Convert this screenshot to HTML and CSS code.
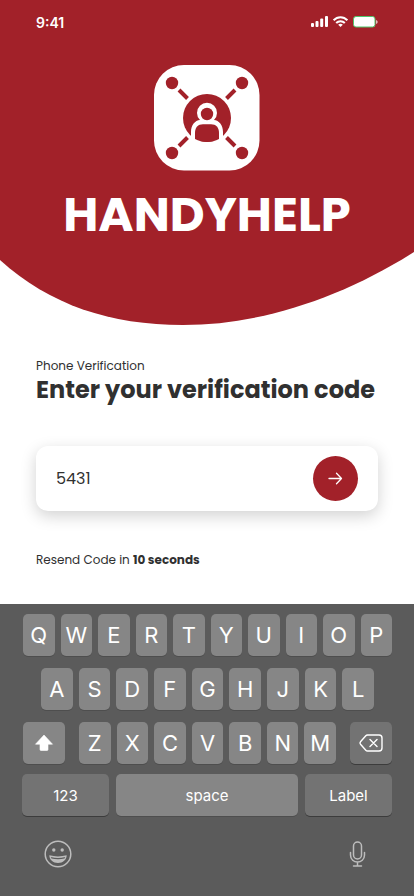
FILE: index.html
```html
<!DOCTYPE html>
<html lang="en">
<head>
<meta charset="utf-8">
<meta name="viewport" content="width=device-width, initial-scale=1">
<title>HandyHelp – Phone Verification</title>
<link rel="stylesheet" href="styles.css">
</head>
<body>
<div class="screen">
  <header class="hero">
    <svg class="hero-shape" viewBox="0 0 414 326" preserveAspectRatio="none" aria-hidden="true">
      <path d="M0 0H414V252C343 297 262 325 183 325C110 325 50 305 0 260Z" fill="#a22129"/>
    </svg>
    <div class="status">
      <span class="time">9:41</span>
      <svg width="68" height="12" viewBox="0 0 68 12" aria-hidden="true">
        <g fill="#fff">
          <rect x="1" y="7" width="3" height="4" rx="1"/>
          <rect x="5.500" y="5" width="3" height="6" rx="1"/>
          <rect x="10.200" y="2.500" width="3" height="8.500" rx="1"/>
          <rect x="15" y="0" width="3" height="11" rx="1"/>
          <path d="M66.300 4v4c1.600-.7 1.600-3.300 0-4Z"/>
        </g>
        <g fill="none" stroke="#fff" stroke-width="2">
          <path d="M23.600 4.200C27.500.1 33.500.1 37.400 4.200"/>
          <path d="M26.200 7C28.600 4.500 32.400 4.500 34.800 7"/>
        </g>
        <path d="M28.200 8.700C29.600 7.400 31.400 7.400 32.800 8.700L30.500 11Z" fill="#fff"/>
        <rect x="43.500" y=".5" width="21.500" height="10.500" rx="2.500" fill="#fff" stroke="#4fc66b"/>
      </svg>
    </div>
    <svg class="logo" width="106" height="106" viewBox="0 0 106 106" aria-hidden="true">
      <rect width="105.500" height="105.500" rx="30" fill="#fff"/>
      <g stroke="#a22129" stroke-width="4">
        <path d="M25 25L33.500 33.500M81 25L72.500 33.500M25 81L33.500 72.500M81 81L72.500 72.500"/>
      </g>
      <g fill="#a22129">
        <circle cx="18" cy="18" r="6.200"/><circle cx="88" cy="18" r="6.200"/>
        <circle cx="18" cy="88" r="6.200"/><circle cx="88" cy="88" r="6.200"/>
        <circle cx="53" cy="53" r="24"/>
      </g>
      <path d="M37 76V67C37 60 41 55.500 46 55A10 10 0 1 1 60 55C65 55.500 69 60 69 67V76Z" fill="#fff"/>
      <circle cx="53" cy="49" r="6.200" fill="#a22129"/>
      <path d="M41 74V68C41 62.500 44 59.200 49 59.200H57C62 59.200 65 62.500 65 68V74C58 78 48 78 41 74Z" fill="#a22129"/>
    </svg>
    <h1 class="brand">HANDYHELP</h1>
  </header>

  <main class="content">
    <p class="note">Phone Verification</p>
    <h2 class="title"><label for="code">Enter your verification code</label></h2>
    <form class="field">
      <input class="code" id="code" type="text" inputmode="numeric" value="5431">
      <button class="submit" type="button" aria-label="Continue">
        <svg width="15" height="13" viewBox="0 0 15 13" fill="none" stroke="#fff" stroke-width="1.300" stroke-linecap="round" stroke-linejoin="round" aria-hidden="true"><path d="M1 6.500H13.500M8.500 1.300L13.500 6.500L8.500 11.700"/></svg>
      </button>
    </form>
    <p class="note">Resend Code in <strong>10 seconds</strong></p>
  </main>

  <section class="keyboard" aria-label="Keyboard">
    <div class="row">
      <button class="key">Q</button><button class="key">W</button><button class="key">E</button><button class="key">R</button><button class="key">T</button><button class="key">Y</button><button class="key">U</button><button class="key">I</button><button class="key">O</button><button class="key">P</button>
    </div>
    <div class="row row-inset">
      <button class="key">A</button><button class="key">S</button><button class="key">D</button><button class="key">F</button><button class="key">G</button><button class="key">H</button><button class="key">J</button><button class="key">K</button><button class="key">L</button>
    </div>
    <div class="row row-wide">
      <button class="key key-side" aria-label="Shift">
        <svg width="20" height="18" viewBox="0 0 20 18" aria-hidden="true"><path d="M10 1L18.500 10.200H14V15.500Q14 16.500 13 16.500H7Q6 16.500 6 15.500V10.200H1.500Z" fill="#fff" stroke="#fff" stroke-width=".6" stroke-linejoin="round"/></svg>
      </button>
      <div class="row letters">
        <button class="key">Z</button><button class="key">X</button><button class="key">C</button><button class="key">V</button><button class="key">B</button><button class="key">N</button><button class="key">M</button>
      </div>
      <button class="key key-side key-dark" aria-label="Delete">
        <svg width="24" height="18" viewBox="0 0 24 18" fill="none" stroke="#fff" stroke-width="1.400" stroke-linecap="round" stroke-linejoin="round" aria-hidden="true"><path d="M8.500 1H20Q23 1 23 4V14Q23 17 20 17H8.500Q7.500 17 6.800 16.200L1.500 10.200Q.6 9 1.500 7.800L6.800 1.800Q7.500 1 8.500 1ZM11 5.500L18 12.500M18 5.500L11 12.500"/></svg>
      </button>
    </div>
    <div class="row row-bottom">
      <button class="key key-text key-dark key-fn">123</button>
      <button class="key key-text key-space">space</button>
      <button class="key key-text key-dark key-fn">Label</button>
    </div>
    <div class="tools">
      <button class="tool" aria-label="Emoji">
        <svg width="28" height="28" viewBox="0 0 28 28" aria-hidden="true">
          <circle cx="14" cy="14" r="12.800" fill="none" stroke="#bdbdbd" stroke-width="1.500"/>
          <circle cx="9.800" cy="10" r="1.700" fill="#bdbdbd"/><circle cx="18.200" cy="10" r="1.700" fill="#bdbdbd"/>
          <path d="M5.300 15.300C11 16.800 17 16.800 22.700 15.300C22.500 20 19 23 14 23S5.500 20 5.300 15.300Z" fill="#bdbdbd"/>
          <path d="M6.800 17C11.500 18.200 16.500 18.200 21.200 17L20.500 18.500C16.500 19.600 11.500 19.600 7.500 18.500Z" fill="#5b5b5b"/>
        </svg>
      </button>
      <button class="tool" aria-label="Dictate">
        <svg width="17" height="28" viewBox="0 0 17 28" fill="none" stroke="#bdbdbd" stroke-width="1.500" stroke-linecap="round" aria-hidden="true"><rect x="4.500" y="2" width="8" height="17" rx="4"/><path d="M1.500 12.500V15C1.500 24.300 15.500 24.300 15.500 15V12.500M8.500 22V26M4.500 26H12.500"/></svg>
      </button>
    </div>
  </section>
</div>
</body>
</html>
```
FILE: styles.css
```css
* {
  box-sizing: border-box;
}

body {
  margin: 0;
  background: #fff;
  color: #303030;
  font-family: Poppins, Inter, "Liberation Sans", sans-serif;
}

h1,
h2,
p {
  margin: 0;
}

button {
  padding: 0;
  border: 0;
  background: none;
  font: inherit;
  color: inherit;
}

.screen {
  display: flex;
  flex-direction: column;
  min-height: 100vh;
}

.hero {
  position: relative;
  display: flex;
  flex-direction: column;
  align-items: center;
  padding-bottom: 75px;
  color: #fff;
}

.hero-shape {
  position: absolute;
  inset: 0;
  width: 100%;
  height: 100%;
  z-index: -1;
}

.status {
  display: flex;
  align-self: stretch;
  align-items: center;
  justify-content: space-between;
  height: 44px;
  padding: 0 36px;
}

.time {
  font-family: Inter, sans-serif;
  font-size: 14px;
  font-weight: 600;
}

.logo {
  margin-top: 21px;
}

.brand {
  margin-top: 8px;
  font-size: 48px;
  font-weight: 700;
  line-height: 72px;
}

.content {
  padding: 31px 36px 35px;
}

.note {
  font-size: 12px;
  line-height: 18px;
}

.title {
  font-size: 24px;
  font-weight: 700;
  line-height: 30px;
  white-space: nowrap;
}

.field {
  display: flex;
  align-items: center;
  height: 65px;
  margin: 41px 0 40px;
  padding: 0 20px;
  border-radius: 12px;
  background: #fff;
  box-shadow: 0 5px 16px rgba(0, 0, 0, 0.18);
}

.code {
  flex: 1;
  min-width: 0;
  padding: 0;
  border: 0;
  outline: 0;
  background: none;
  color: inherit;
  font: inherit;
  font-size: 16px;
}

.submit {
  display: grid;
  place-items: center;
  width: 45px;
  height: 45px;
  border-radius: 50%;
  background: #a22129;
}

.keyboard {
  flex: 1;
  padding: 10px 22px 0 23px;
  background: #5b5b5b;
  color: #fff;
  font-family: Inter, sans-serif;
}

.row {
  display: flex;
  gap: 6px;
  margin-bottom: 12px;
}

.row-inset {
  padding: 0 18px;
}

.row-wide {
  gap: 14px;
  margin-bottom: 10px;
}

.letters {
  flex: 1;
  margin: 0;
}

.row-bottom {
  gap: 7px;
  margin-left: -1px;
}

.key {
  display: grid;
  flex: 1 1 0;
  place-items: center;
  min-width: 0;
  height: 42px;
  border-radius: 5px;
  background: #868686;
  box-shadow: 0 1px 0 #4e4e4e;
  font-size: 22px;
  font-weight: 400;
}

.key-side {
  flex: 0 0 42px;
}

.key-dark {
  background: #737373;
  box-shadow: 0 1px 0 #3c3c3c;
}

.key-text {
  font-size: 15px;
}

.key-fn {
  flex: 0 0 87px;
}

.tools {
  display: flex;
  justify-content: space-between;
  padding: 12px 26px 0 21px;
}

.tool {
  display: grid;
  place-items: center;
}
```
